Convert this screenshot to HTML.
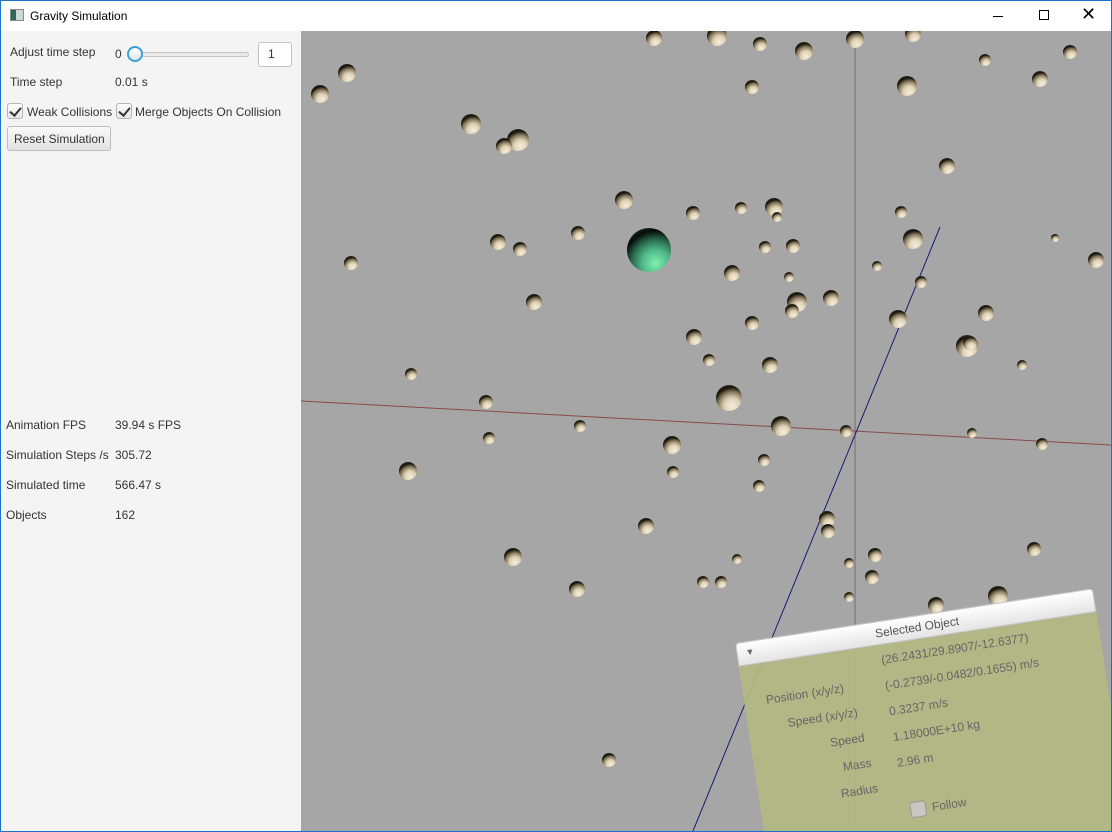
<!DOCTYPE html>
<html><head><meta charset="utf-8"><style>
*{margin:0;padding:0;box-sizing:border-box}
html,body{width:1112px;height:832px;overflow:hidden}
body{font-family:"Liberation Sans",sans-serif;font-size:12px;color:#333;background:#fff;position:relative}
.clip{position:absolute;left:0;top:0;width:1112px;height:832px;overflow:hidden}
.win{position:absolute;left:0;top:0;width:1112px;height:832px;border:1px solid #1a73c9;z-index:5;pointer-events:none}
.title{position:absolute;left:1px;top:1px;width:1110px;height:30px;background:#fff}
.title span{position:absolute;left:29px;top:8px;font-size:12px;color:#000}
.left{position:absolute;left:1px;top:31px;width:300px;height:800px;background:#f4f4f4}
.view{position:absolute;left:301px;top:31px;width:810px;height:800px;background:#a6a6a6;overflow:hidden}
.t{position:absolute;white-space:nowrap}
.s{position:absolute;border-radius:50%;background:radial-gradient(circle at 62% 80%,#f6eedc 0%,#ddd0b4 30%,#8a7c60 52%,#151309 70%,#3a362c 88%,#777 100%)}
.cb{position:absolute;width:16px;height:16px;border:1px solid #b5b5b5;border-radius:3px;background:linear-gradient(#fdfdfd,#e6e6e6)}
.cb:after{content:"";position:absolute;left:4px;top:1px;width:5px;height:9px;border:solid #333;border-width:0 2px 2px 0;transform:rotate(40deg)}
</style></head><body>
<div class="clip">
<div class="title">
<div style="position:absolute;left:9px;top:8px;width:14px;height:12px;border:1px solid #888;background:linear-gradient(90deg,#2b6a5a 0 40%,#cfd8d8 40%)"></div>
<span>Gravity Simulation</span>
<div style="position:absolute;left:992px;top:15px;width:10px;height:1px;background:#000"></div>
<div style="position:absolute;left:1038px;top:9px;width:10px;height:10px;border:1px solid #000"></div>
<div class="t" style="left:1080px;top:3px;font-size:18px;color:#000">✕</div>
</div>
<div class="left">
<div class="t" style="left:9px;top:14px">Adjust time step</div>
<div class="t" style="left:114px;top:16px">0</div>
<div style="position:absolute;left:128px;top:21px;width:120px;height:5px;border:1px solid #c4c4c4;border-radius:3px;background:#eaeaea"></div>
<div style="position:absolute;left:126px;top:15px;width:16px;height:16px;border-radius:50%;border:2px solid #3aa0d8;background:linear-gradient(#fff,#e4e4e4)"></div>
<div style="position:absolute;left:257px;top:11px;width:34px;height:25px;border:1px solid #c4c4c4;border-radius:3px;background:#fff"></div>
<div class="t" style="left:267px;top:16px">1</div>
<div class="t" style="left:9px;top:44px">Time step</div>
<div class="t" style="left:114px;top:44px">0.01 s</div>
<div class="cb" style="left:6px;top:72px"></div>
<div class="t" style="left:26px;top:74px">Weak Collisions</div>
<div class="cb" style="left:115px;top:72px"></div>
<div class="t" style="left:134px;top:74px">Merge Objects On Collision</div>
<div style="position:absolute;left:6px;top:95px;width:104px;height:25px;border:1px solid #bdbdbd;border-radius:3px;background:linear-gradient(#fafafa,#e2e2e2)"></div>
<div class="t" style="left:13px;top:101px">Reset Simulation</div>
<div class="t" style="left:5px;top:387px">Animation FPS</div><div class="t" style="left:114px;top:387px">39.94 s FPS</div>
<div class="t" style="left:5px;top:417px">Simulation Steps /s</div><div class="t" style="left:114px;top:417px">305.72</div>
<div class="t" style="left:5px;top:447px">Simulated time</div><div class="t" style="left:114px;top:447px">566.47 s</div>
<div class="t" style="left:5px;top:477px">Objects</div><div class="t" style="left:114px;top:477px">162</div>
</div>
<div class="view">
<svg width="810" height="800" style="position:absolute;left:0;top:0">
<line x1="554" y1="0" x2="554" y2="800" stroke="#707070" stroke-width="1"/>
<line x1="0" y1="370" x2="810" y2="414" stroke="#8a4a4a" stroke-width="1"/>
<line x1="639" y1="196" x2="392" y2="800" stroke="#1a1a70" stroke-width="1"/>
</svg>
<div id="sp"></div>
<div style="position:absolute;left:326px;top:197px;width:44px;height:44px;border-radius:50%;background:radial-gradient(circle at 65% 80%,#7ef0b0 0%,#4fb888 30%,#2a6a4e 52%,#050a08 72%,#2a4a3c 92%,#4a6a5c 100%)"></div>
</div>
<script>
var L=[[353,7,8],[416,5,10],[459,13,7],[503,20,9],[554,8,9],[612,3,8],[684,29,6],[739,48,8],[769,21,7],[46,42,9],[19,63,9],[451,56,7],[606,55,10],[170,93,10],[217,109,11],[203,115,8],[646,135,8],[323,169,9],[392,182,7],[440,177,6],[473,176,9],[476,186,5],[600,181,6],[612,208,10],[754,207,4],[795,229,8],[197,211,8],[219,218,7],[277,202,7],[464,216,6],[492,215,7],[576,235,5],[50,232,7],[431,242,8],[488,246,5],[620,251,6],[233,271,8],[530,267,8],[496,271,10],[491,280,7],[451,292,7],[597,288,9],[685,282,8],[393,306,8],[666,315,11],[669,312,7],[408,329,6],[469,334,8],[721,334,5],[110,343,6],[428,367,13],[185,371,7],[279,395,6],[480,395,10],[545,400,6],[671,402,5],[741,413,6],[188,407,6],[371,414,9],[107,440,9],[463,429,6],[372,441,6],[458,455,6],[526,488,8],[527,500,7],[345,495,8],[212,526,9],[733,518,7],[548,532,5],[574,524,7],[436,528,5],[571,546,7],[276,558,8],[402,551,6],[420,551,6],[548,566,5],[635,574,8],[697,565,10],[308,729,7]];
var h="";L.forEach(function(a){var d=a[2]*2;h+='<div class="s" style="left:'+(a[0]-a[2])+'px;top:'+(a[1]-a[2])+'px;width:'+d+'px;height:'+d+'px"></div>'});
document.getElementById("sp").innerHTML=h;
</script>
<div style="position:absolute;left:735px;top:643px;width:362px;height:250px;transform-origin:0 0;transform:rotate(-8.7deg)">
<div style="position:absolute;left:0;top:0;width:362px;height:24px;background:linear-gradient(#ffffff,#e4e4e4);border:1px solid #c8c8c8;border-radius:4px 4px 0 0"></div>
<div class="t" style="left:140px;top:5px;color:#555;font-size:12px">Selected Object</div>
<div class="t" style="left:9px;top:6px;color:#666;font-size:9px">▼</div>
<div style="position:absolute;left:0;top:24px;width:362px;height:226px;background:rgba(178,184,130,0.92)"></div>
<div style="color:#666;font-size:12px">
<div class="t" style="left:22px;top:54px">Position (x/y/z)</div><div class="t" style="left:142px;top:32px">(26.2431/29.8907/-12.6377)</div>
<div class="t" style="left:40px;top:80px">Speed (x/y/z)</div><div class="t" style="left:142px;top:58px">(-0.2739/-0.0482/0.1655) m/s</div>
<div class="t" style="left:79px;top:106px">Speed</div><div class="t" style="left:142px;top:84px">0.3237 m/s</div>
<div class="t" style="left:88px;top:132px">Mass</div><div class="t" style="left:142px;top:110px">1.18000E+10 kg</div>
<div class="t" style="left:82px;top:158px">Radius</div><div class="t" style="left:142px;top:136px">2.96 m</div>
<div style="position:absolute;left:148px;top:184px;width:16px;height:16px;border:1px solid #999;border-radius:3px;background:#c8c8c0"></div>
<div class="t" style="left:170px;top:185px">Follow</div>
</div>
</div>
</div>
<div class="win"></div>
</body></html>
